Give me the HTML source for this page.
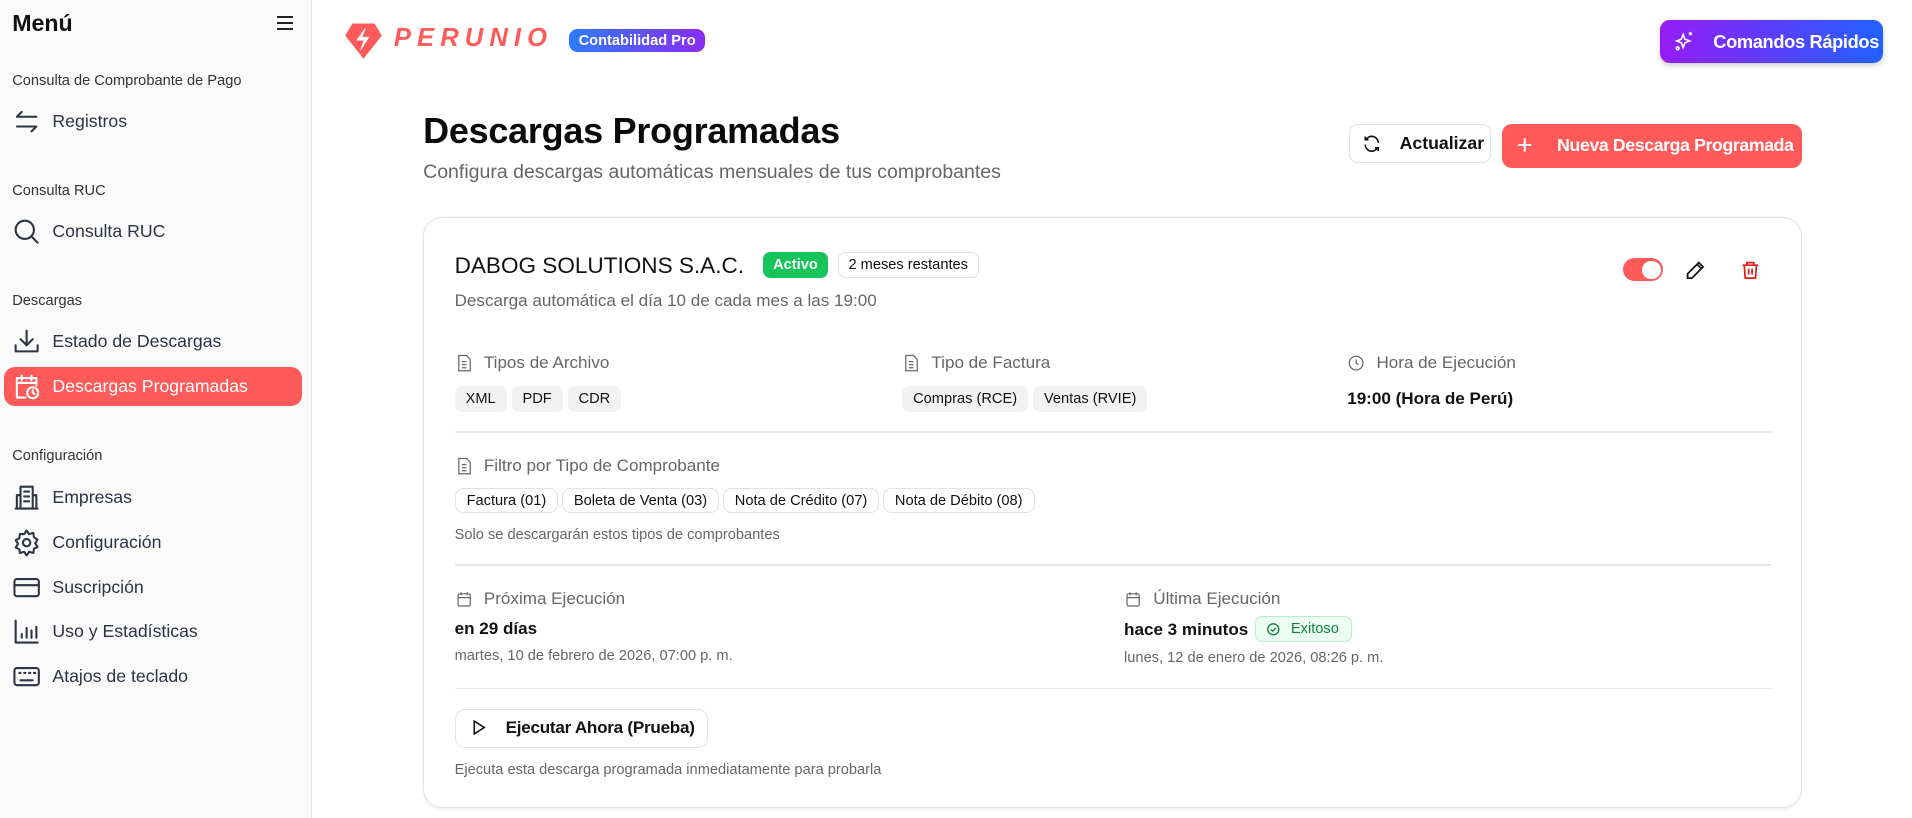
<!DOCTYPE html>
<html><head><meta charset="utf-8">
<style>
*{box-sizing:border-box;margin:0;padding:0}
html,body{width:1912px;height:818px;overflow:hidden;background:#fff}
#root{zoom:1.2194;width:1568px;height:671px;position:relative;font-family:"Liberation Sans",sans-serif;color:#111}
.a{position:absolute;white-space:nowrap}
.side{position:absolute;left:0;top:0;width:256px;height:671px;background:#fafafa;border-right:1px solid #e6e6e6}
.sec{position:absolute;left:10px;font-size:12px;color:#333}
.it{position:absolute;left:10px;height:24px;display:flex;align-items:center;font-size:14.5px;color:#2d3340}
.it svg{width:24px;height:24px;margin-right:9px;stroke:#2d3340;fill:none;stroke-width:1.7;stroke-linecap:round;stroke-linejoin:round}
.chip{display:inline-block;font-size:12px;background:#f2f2f2;border-radius:6px;padding:4px 9px;margin-right:4px;color:#111}
.chipb{display:inline-block;font-size:12px;border:1px solid #e2e2e2;border-radius:7px;padding:3px 9px;margin-right:3px;color:#111}
.lab{position:absolute;font-size:14px;color:#666;display:flex;align-items:center}
.lab svg{width:15px;height:15px;margin-right:9px;stroke:#666;fill:none;stroke-width:1.6}
.hr{position:absolute;left:25px;right:25px;height:1px;background:#e6e6e6}
.bd{display:flex;align-items:center;justify-content:center}
</style></head><body><div id="root">
<div class="side">
 <div class="a" style="left:10px;top:8px;font-size:19px;font-weight:bold;color:#111">Menú</div>
 <div class="a" style="left:227px;top:13px;width:13px;">
  <div style="height:2px;background:#222;margin-bottom:3px"></div><div style="height:2px;background:#222;margin-bottom:3px"></div><div style="height:2px;background:#222"></div></div>
 <div class="sec" style="top:60px">Consulta de Comprobante de Pago</div>
 <div class="it" style="top:88px"><svg viewBox="0 0 24 24"><path d="M20 8H4l4-4M4 16h16l-4 4"/></svg>Registros</div>
 <div class="sec" style="top:150px">Consulta RUC</div>
 <div class="it" style="top:178px"><svg viewBox="0 0 24 24"><circle cx="10.5" cy="10.5" r="7.5"/><path d="M16 16l5 5"/></svg>Consulta RUC</div>
 <div class="sec" style="top:240px">Descargas</div>
 <div class="it" style="top:268px"><svg viewBox="0 0 24 24"><path d="M3 15v5h18v-5M12 3v12M7 10l5 5 5-5"/></svg>Estado de Descargas</div>
 <div style="position:absolute;left:3px;top:301px;width:245px;height:32px;background:#ff5a5a;border-radius:9px"></div>
 <div class="it" style="top:305px;color:#fff"><svg viewBox="0 0 24 24" style="stroke:#fff"><path d="M11 21H4V5h16v6M4 9h16M8 3v4M16 3v4"/><circle cx="17" cy="17" r="4.5"/><path d="M17 15v2l1.5 1"/></svg>Descargas Programadas</div>
 <div class="sec" style="top:367px">Configuración</div>
 <div class="it" style="top:396px"><svg viewBox="0 0 24 24"><path d="M7 21V3h10v18M7 10H4v11h16V10h-3M10 7h4M10 11h4M10 15h4M3 21h18"/></svg>Empresas</div>
 <div class="it" style="top:433px"><svg viewBox="0 0 24 24"><circle cx="12" cy="12" r="3"/><path d="M12 2l2 3 3.5-1 .5 3.5 3 2-2 3 2 3-3 1.5-.5 3.5-3.5-1-2 3-2-3-3.5 1L6 17.5 3 16l2-3-2-3 3-1.5L6.5 5 10 5z"/></svg>Configuración</div>
 <div class="it" style="top:470px"><svg viewBox="0 0 24 24"><rect x="2" y="5" width="20" height="14" rx="2"/><path d="M2 10h20"/></svg>Suscripción</div>
 <div class="it" style="top:506px"><svg viewBox="0 0 24 24"><path d="M3 3v18h18M8 17v-3M12 17V9M16 17v-6M20 17V8"/></svg>Uso y Estadísticas</div>
 <div class="it" style="top:543px"><svg viewBox="0 0 24 24"><rect x="2" y="5" width="20" height="14" rx="2"/><path d="M6 9h1M10 9h1M14 9h1M18 9h1M7 15h10"/></svg>Atajos de teclado</div>
</div>

<svg class="a" style="left:282px;top:17px" width="32" height="32" viewBox="0 0 32 32"><path d="M7 2h18l6 10-15 19L1 12z" fill="#ff5a5a"/><path d="M17 6l-7 10h6l-3 9 8-12h-6l3-7z" fill="#fff"/></svg>
<div class="a" style="left:323px;top:20px;font-size:21px;font-weight:bold;font-style:italic;color:#ff5a5a;letter-spacing:5px">PERUNIO</div>
<div class="a bd" style="left:467px;top:24px;width:111px;height:19px;border-radius:7px;background:linear-gradient(90deg,#2d7cff,#8a2cf0);color:#fff;font-size:12px;font-weight:bold">Contabilidad Pro</div>

<div class="a" style="left:1361px;top:16px;width:183px;height:36px;border-radius:8px;background:linear-gradient(90deg,#961cf5,#2162ff);box-shadow:0 2px 5px rgba(0,0,0,.2);color:#fff;font-size:15px;font-weight:bold;line-height:36px;padding-left:44px;letter-spacing:-0.3px">Comandos Rápidos</div>
<svg class="a" style="left:1373px;top:25px" width="18" height="18" viewBox="0 0 24 24" fill="none" stroke="#fff" stroke-width="1.8"><path d="M10 5l2 5 5 2-5 2-2 5-2-5-5-2 5-2z"/><path d="M18 2v4M16 4h4"/><circle cx="4" cy="20" r="1.5"/></svg>

<div class="a" style="left:347px;top:90px;font-size:29.5px;font-weight:bold;color:#0a0a0a;letter-spacing:-0.2px">Descargas Programadas</div>
<div class="a" style="left:347px;top:132px;font-size:16px;color:#666">Configura descargas automáticas mensuales de tus comprobantes</div>

<div class="a" style="left:1106px;top:102px;width:117px;height:32px;border:1px solid #e2e2e2;border-radius:7px;font-size:14.5px;font-weight:bold;line-height:30px;padding-left:41px;color:#111">Actualizar</div>
<svg class="a" style="left:1117px;top:110px" width="16" height="16" viewBox="0 0 24 24" fill="none" stroke="#111" stroke-width="2"><path d="M20 11A8 8 0 0 0 5 7M4 3v4h4M4 13a8 8 0 0 0 15 4M20 21v-4h-4"/></svg>
<div class="a" style="left:1232px;top:102px;width:246px;height:36px;background:#ff5a5a;border-radius:8px;color:#fff;font-size:14.5px;font-weight:bold;line-height:36px;padding-left:45px;letter-spacing:-0.3px">Nueva Descarga Programada</div>
<div class="a" style="left:1244px;top:107px;color:#fff;font-size:22px;font-weight:300">+</div>

<div class="a" style="left:347px;top:178px;width:1131px;height:485px;border:1px solid #e3e3e3;border-radius:16px;box-shadow:0 1px 3px rgba(0,0,0,.08)">
 <div class="a" style="left:25px;top:29px;font-size:18.5px;color:#111">DABOG SOLUTIONS S.A.C.</div>
 <div class="a bd" style="left:278px;top:28px;width:53px;height:21px;background:#16c45a;border-radius:6px;color:#fff;font-size:12px;font-weight:bold">Activo</div>
 <div class="a bd" style="left:339px;top:28px;width:116px;height:21px;border:1px solid #e2e2e2;border-radius:6px;font-size:12px;color:#111">2 meses restantes</div>
 <div class="a" style="left:25px;top:60px;font-size:14px;color:#666">Descarga automática el día 10 de cada mes a las 19:00</div>
 <div class="a" style="left:983px;top:33px;width:33px;height:19px;background:#ff5a5a;border-radius:10px"><div style="position:absolute;right:2px;top:2px;width:15px;height:15px;border-radius:50%;background:#fff"></div></div>
 <svg class="a" style="left:1034px;top:34px" width="17" height="17" viewBox="0 0 24 24" fill="none" stroke="#111" stroke-width="2"><path d="M16 3l5 5L8 21H3v-5zM14 5l5 5"/></svg>
 <svg class="a" style="left:1079px;top:34px" width="17" height="17" viewBox="0 0 24 24" fill="none" stroke="#e01b1b" stroke-width="2"><path d="M3 6h18M8 6V3h8v3M5 6l1 15h12l1-15M10 10v7M14 10v7"/></svg>

 <div class="lab" style="left:25px;top:111px"><svg viewBox="0 0 24 24"><path d="M5 2h10l5 5v15H5zM9 10h6M9 14h6M9 18h6"/></svg>Tipos de Archivo</div>
 <div class="a" style="left:25px;top:138px"><span class="chip">XML</span><span class="chip">PDF</span><span class="chip">CDR</span></div>
 <div class="lab" style="left:392px;top:111px"><svg viewBox="0 0 24 24"><path d="M5 2h10l5 5v15H5zM9 10h6M9 14h6M9 18h6"/></svg>Tipo de Factura</div>
 <div class="a" style="left:392px;top:138px"><span class="chip">Compras (RCE)</span><span class="chip">Ventas (RVIE)</span></div>
 <div class="lab" style="left:757px;top:111px"><svg viewBox="0 0 24 24"><circle cx="12" cy="12" r="9"/><path d="M12 7v5l3 2"/></svg>Hora de Ejecución</div>
 <div class="a" style="left:757px;top:140px;font-size:14px;font-weight:bold;color:#111">19:00 (Hora de Perú)</div>
 <div class="hr" style="top:175px"></div>

 <div class="lab" style="left:25px;top:195px"><svg viewBox="0 0 24 24"><path d="M5 2h10l5 5v15H5zM9 10h6M9 14h6M9 18h6"/></svg>Filtro por Tipo de Comprobante</div>
 <div class="a" style="left:25px;top:221px"><span class="chipb">Factura (01)</span><span class="chipb">Boleta de Venta (03)</span><span class="chipb">Nota de Crédito (07)</span><span class="chipb">Nota de Débito (08)</span></div>
 <div class="a" style="left:25px;top:253px;font-size:12px;color:#666">Solo se descargarán estos tipos de comprobantes</div>
 <div class="hr" style="top:284px"></div>

 <div class="lab" style="left:25px;top:304px"><svg viewBox="0 0 24 24"><rect x="4" y="5" width="16" height="16" rx="2"/><path d="M4 10h16M8 3v4M16 3v4"/></svg>Próxima Ejecución</div>
 <div class="a" style="left:25px;top:329px;font-size:14px;font-weight:bold">en 29 días</div>
 <div class="a" style="left:25px;top:353px;font-size:12px;color:#666">martes, 10 de febrero de 2026, 07:00 p. m.</div>
 <div class="lab" style="left:574px;top:304px"><svg viewBox="0 0 24 24"><rect x="4" y="5" width="16" height="16" rx="2"/><path d="M4 10h16M8 3v4M16 3v4"/></svg>Última Ejecución</div>
 <div class="a" style="left:574px;top:330px;font-size:14px;font-weight:bold">hace 3 minutos</div>
 <div class="a" style="left:681px;top:326px;width:80px;height:22px;background:#ecfdf1;border:1px solid #b8efc8;border-radius:6px;color:#15803d;font-size:12px;line-height:20px;padding-left:29px">Exitoso</div>
 <svg class="a" style="left:690px;top:331px" width="12" height="12" viewBox="0 0 24 24" fill="none" stroke="#15803d" stroke-width="2.2"><circle cx="12" cy="12" r="9"/><path d="M8 12l3 3 5-5"/></svg>
 <div class="a" style="left:574px;top:354px;font-size:12px;color:#666">lunes, 12 de enero de 2026, 08:26 p. m.</div>
 <div class="hr" style="top:385px"></div>

 <div class="a" style="left:25px;top:403px;width:208px;height:32px;border:1px solid #e2e2e2;border-radius:8px;font-size:14px;font-weight:bold;line-height:30px;padding-left:41px;color:#111;letter-spacing:-0.2px">Ejecutar Ahora (Prueba)</div>
 <svg class="a" style="left:38px;top:411px" width="14" height="14" viewBox="0 0 24 24" fill="none" stroke="#111" stroke-width="2.2"><path d="M6 3l14 9-14 9z"/></svg>
 <div class="a" style="left:25px;top:446px;font-size:12px;color:#666">Ejecuta esta descarga programada inmediatamente para probarla</div>
</div>
</div></body></html>
